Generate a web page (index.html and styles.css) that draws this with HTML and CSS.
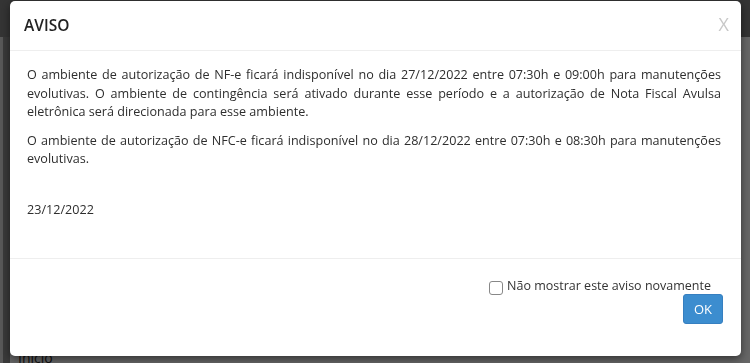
FILE: index.html
```html
<!DOCTYPE html>
<html lang="pt-BR">
<head>
<meta charset="utf-8">
<title>Aviso</title>
<link rel="stylesheet" href="styles.css">
</head>
<body>
<div class="page">
  <div class="topbar"></div>
  <div class="content">
    <div class="side"></div>
    <div class="rail"></div>
    <div class="main">
      <div class="spacer"></div>
      <div class="crumb">Início</div>
    </div>
  </div>
</div>
<div class="backdrop"></div>
<div class="modal">
  <div class="modal-header">
    <h4 class="modal-title">AVISO</h4>
    <span class="close">X</span>
  </div>
  <div class="modal-body">
    <p>O ambiente de autorização de NF-e ficará indisponível no dia 27/12/2022 entre 07:30h e 09:00h para manutenções evolutivas. O ambiente de contingência será ativado durante esse período e a autorização de Nota Fiscal Avulsa eletrônica será direcionada para esse ambiente.</p>
    <p>O ambiente de autorização de NFC-e ficará indisponível no dia 28/12/2022 entre 07:30h e 08:30h para manutenções evolutivas.</p>
    <p class="date">23/12/2022</p>
  </div>
  <div class="modal-footer">
    <label class="check"><span class="box"></span>Não mostrar este aviso novamente</label>
    <button class="btn">OK</button>
  </div>
</div>
</body>
</html>
```

FILE: styles.css
```css
* { box-sizing: border-box; }
html, body { margin: 0; padding: 0; }
body {
  width: 750px;
  height: 363px;
  overflow: hidden;
  font-family: "Open Sans", "Liberation Sans", sans-serif;
  background: #cccccc;
}
.page { width: 750px; height: 363px; display: flex; flex-direction: column; }
.topbar { height: 37px; background: #686868; }
.content { flex: 1; display: flex; }
.side { width: 3px; background: #b0b0b0; }
.rail { width: 7px; background: #747474; }
.main { flex: 1; display: flex; flex-direction: column; }
.spacer { flex: 1; }
.crumb { font-size: 14px; color: #222; padding: 0 0 0 8px; height: 14px; line-height: 18px; }

.backdrop {
  position: fixed; inset: 0;
  background: rgba(0, 0, 0, 0.5);
}

.modal {
  position: fixed;
  left: 10px; top: 1px;
  width: 731px; height: 355px;
  background: #fff;
  border-radius: 5px;
  box-shadow: 0 3px 9px rgba(0, 0, 0, 0.5);
  display: flex; flex-direction: column;
  color: #333;
}
.modal-header {
  height: 50px;
  border-bottom: 1px solid #eee;
  display: flex; align-items: center; justify-content: space-between;
  padding: 0 12px 2px 14px;
}
.modal-title {
  margin: 0;
  font-size: 15.5px;
  font-weight: 600;
  color: #222;
}
.close {
  font-size: 18px;
  color: #c8c8c8;
  font-weight: 400;
  margin-top: -1px;
}
.modal-body {
  height: 208px;
  border-bottom: 1px solid #eee;
  padding: 15px 20px 0 17px;
  font-size: 12.6px;
  line-height: 18.5px;
  color: #2e2e2e;
}
.modal-body p { margin: 0 0 10px; text-align: justify; }
.modal-body p.date { margin-top: 32px; }
.modal-footer {
  flex: 1;
  display: flex; flex-direction: column; align-items: flex-end;
  padding: 18px 18px 0 0;
}
.check {
  display: flex; align-items: center;
  font-size: 12.5px;
  line-height: 18px;
  color: #333;
  margin-right: 12px;
}
.box {
  width: 14px; height: 14px;
  border: 1px solid #888;
  border-radius: 3px;
  margin-right: 4px;
  margin-top: 3px;
  background: #fff;
}
.btn {
  margin-top: -1px;
  width: 40px; height: 30px;
  border: 1px solid #367fc0;
  border-radius: 3px;
  background: #3c8dcf;
  color: #fff;
  font-family: "Open Sans", "Liberation Sans", sans-serif;
  font-size: 13px;
  padding: 0;
}
```
